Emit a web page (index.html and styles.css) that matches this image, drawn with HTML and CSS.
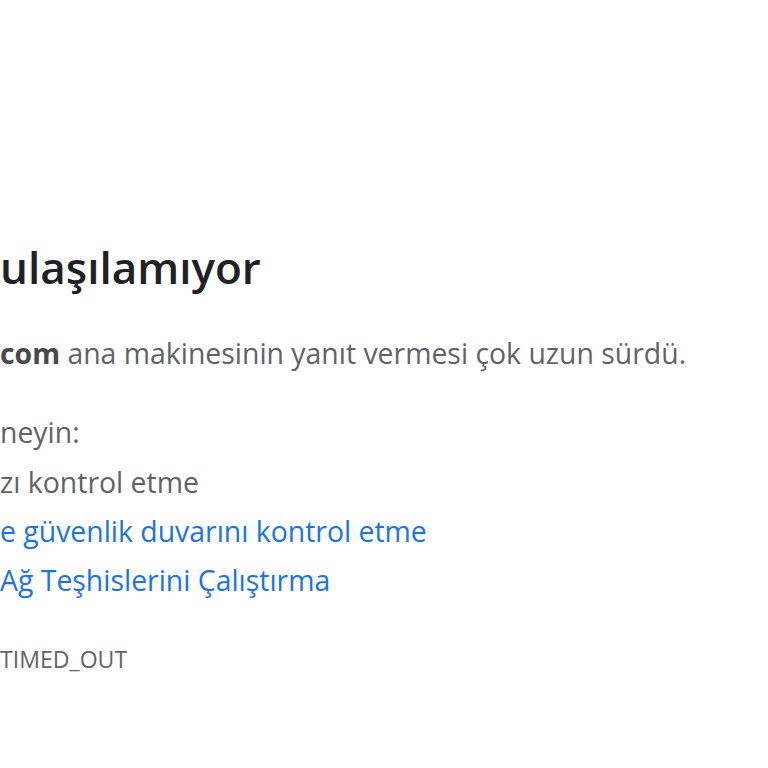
FILE: index.html
```html
<!DOCTYPE html>
<html lang="tr">
<head>
<meta charset="utf-8">
<title>Bu siteye ulaşılamıyor</title>
<link rel="stylesheet" href="styles.css">
</head>
<body>
<div class="wrapper">
  <h1 class="title">ulaşılamıyor</h1>
  <p class="desc"><strong>com</strong> ana makinesinin yanıt vermesi çok uzun sürdü.</p>
  <p class="try">neyin:</p>
  <ul class="suggestions">
    <li class="item">zı kontrol etme</li>
    <li class="item"><a class="link" href="#">e güvenlik duvarını kontrol etme</a></li>
    <li class="item"><a class="link" href="#">Ağ Teşhislerini Çalıştırma</a></li>
  </ul>
  <div class="code">TIMED_OUT</div>
</div>
</body>
</html>
```
FILE: styles.css
```css
html, body {
  margin: 0;
  padding: 0;
  background: #ffffff;
}
body {
  font-family: "Open Sans", "Noto Sans", sans-serif;
  color: #5f6368;
}
.wrapper {
  padding-top: 239px;
  display: flex;
  flex-direction: column;
  align-items: flex-start;
}
.title {
  margin: 0;
  font-size: 44px;
  line-height: 56px;
  font-weight: 600;
  color: #202124;
  white-space: nowrap;
}
.desc {
  margin: 38px 0 0 0;
  font-size: 28.4px;
  line-height: 40px;
  white-space: nowrap;
}
.desc strong {
  font-weight: 700;
  color: #46494e;
}
.try {
  margin: 39px 0 0 0;
  font-size: 28.4px;
  line-height: 40px;
}
.suggestions {
  list-style: none;
  margin: 5.5px 0 0 0;
  padding: 0;
}
.item {
  font-size: 28.4px;
  line-height: 49px;
  white-space: nowrap;
}
.link {
  color: #1a73e8;
  text-decoration: none;
}
.code {
  margin-top: 39.5px;
  font-size: 23.1px;
  line-height: 30px;
  color: #646464;
}
```
